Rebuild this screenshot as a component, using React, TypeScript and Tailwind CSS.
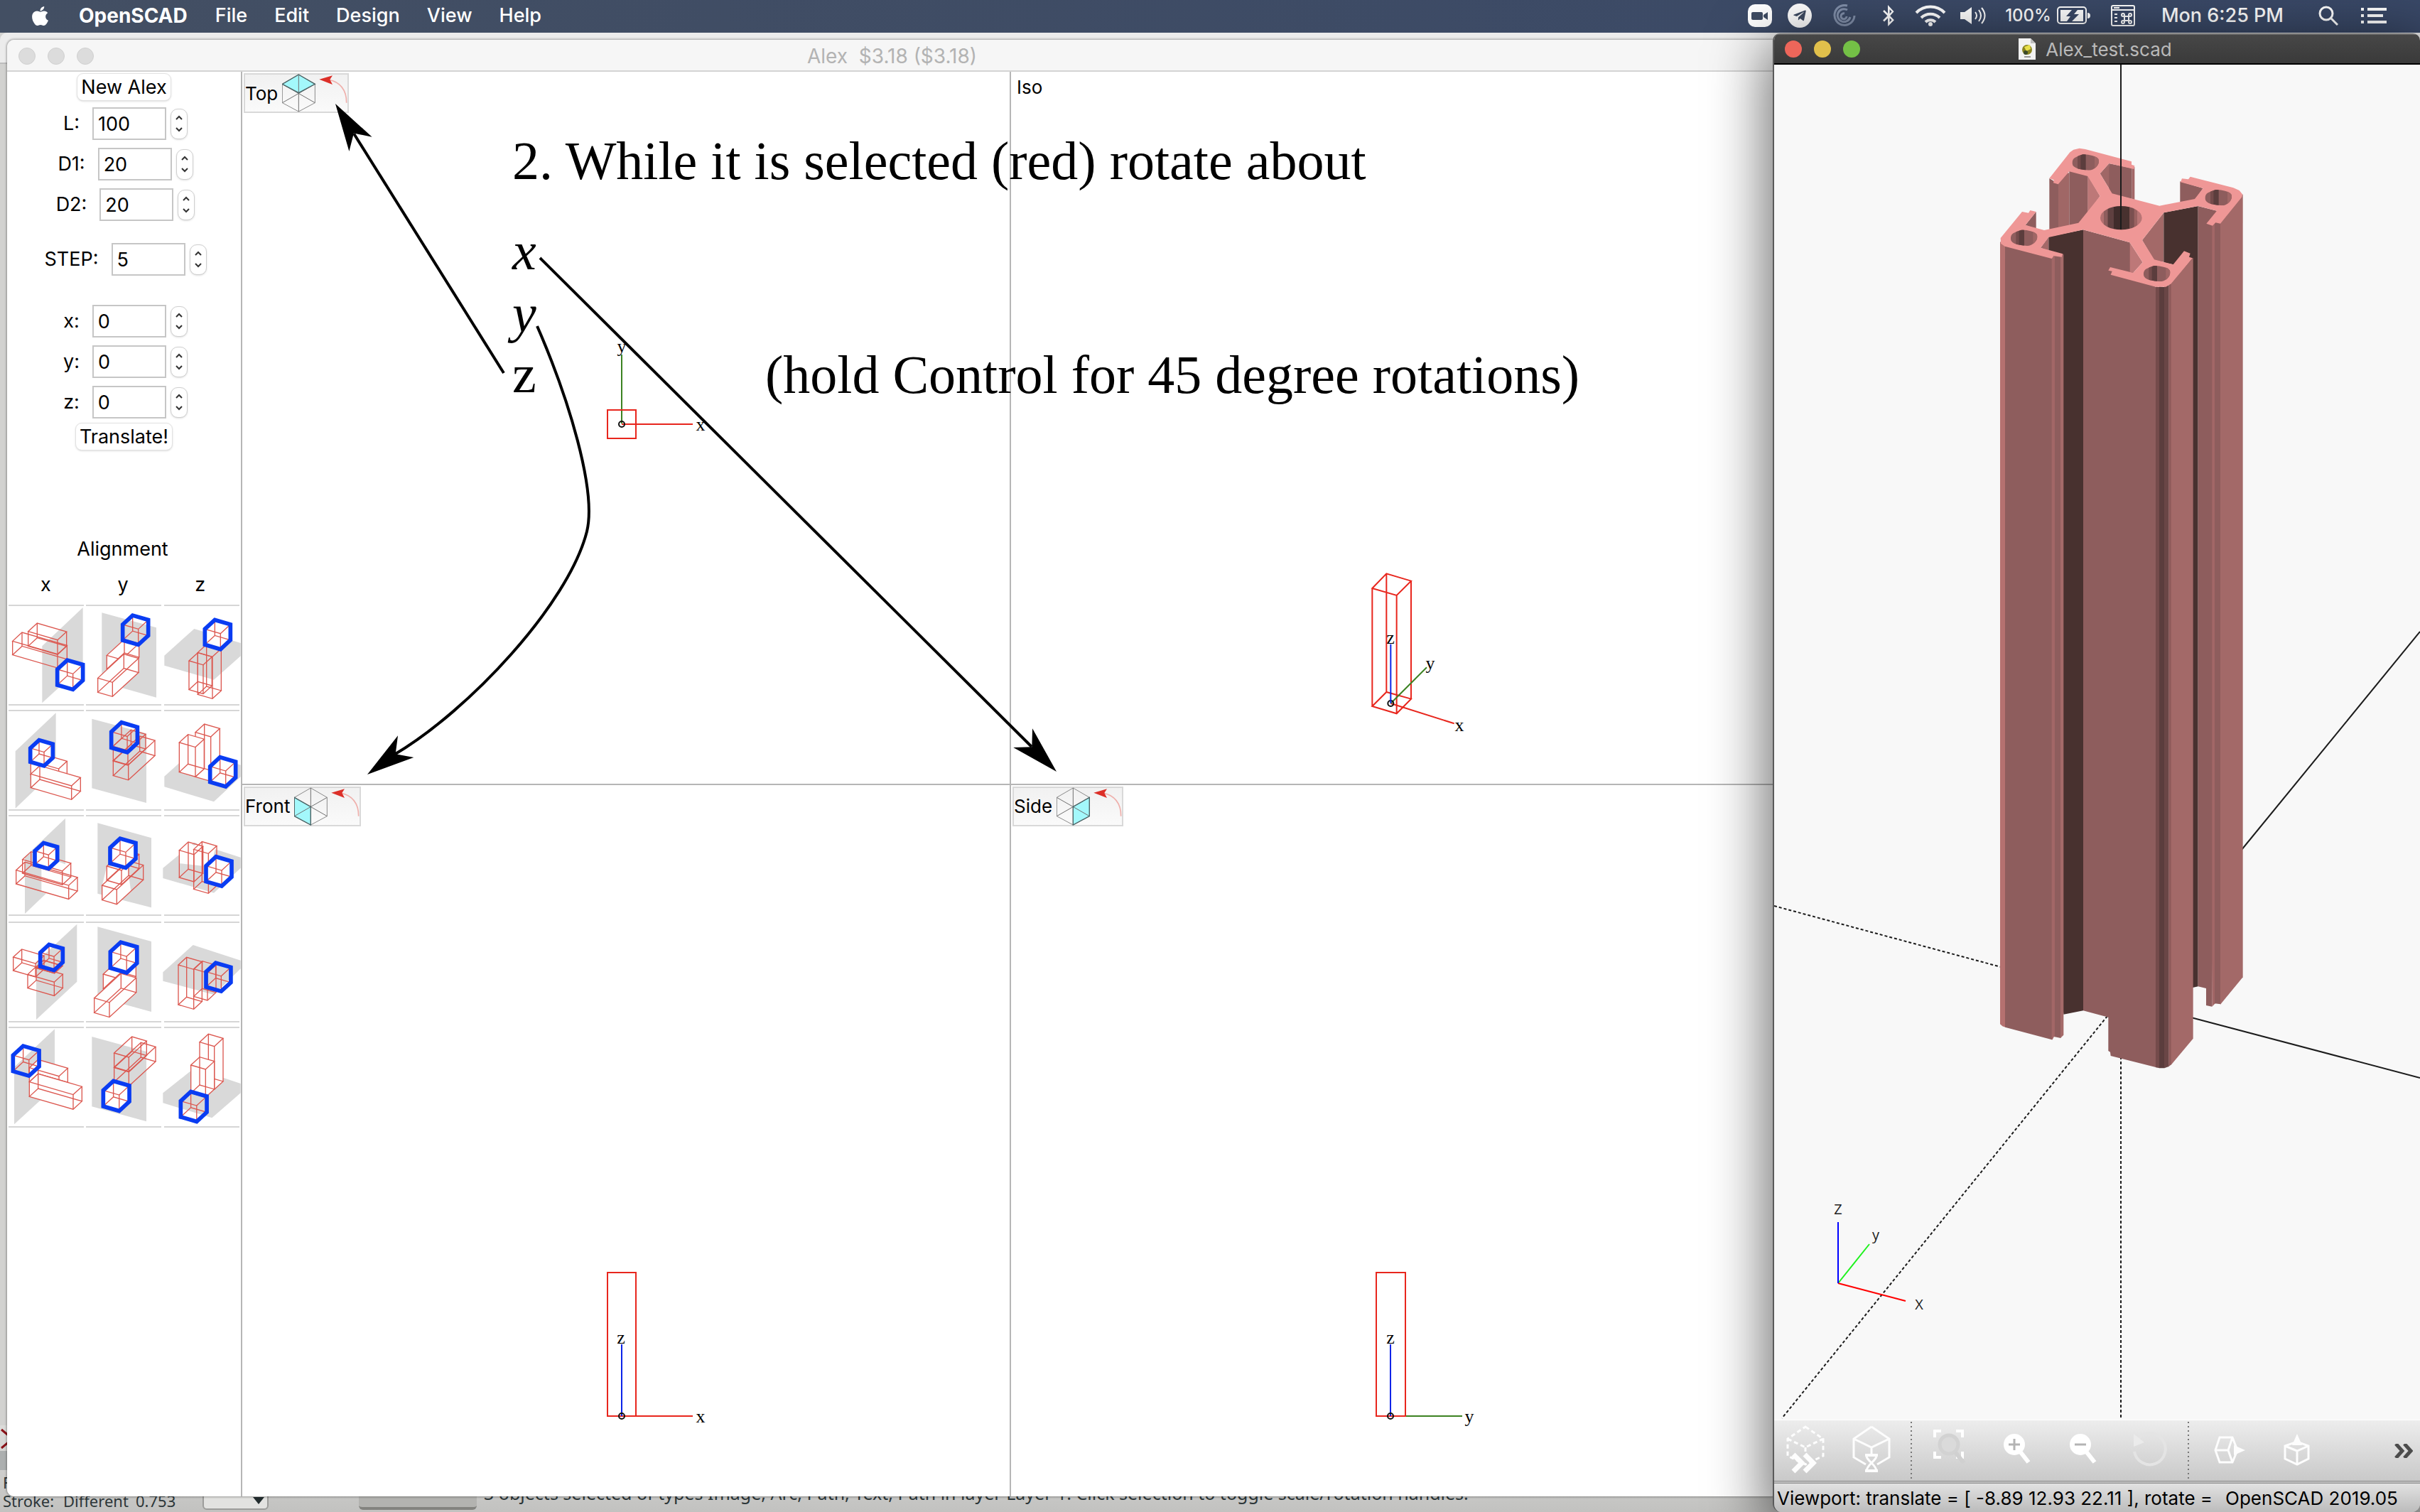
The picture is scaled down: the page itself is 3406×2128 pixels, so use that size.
import React from "react";
import { FaApple, FaTelegramPlane, FaBluetoothB } from "react-icons/fa";

type Pt = [number, number];
const pts = (list: Pt[]) => list.map((p) => p.join(",")).join(" ");

/* ---------- alignment pictograms ---------- */

type BoxDef = [number, number, number, number, number];

function boxPoints([x, y, w, d, h]: BoxDef) {
  const wx = w;
  const wy = w * 0.29;
  const dx = d;
  const dy = -d * 0.92;
  const a: Pt = [x, y];
  const b: Pt = [x + wx, y + wy];
  const c: Pt = [x + wx + dx, y + wy + dy];
  const e: Pt = [x + dx, y + dy];
  const up = (p: Pt): Pt => [p[0], p[1] - h];
  return { a, b, c, e, A: up(a), B: up(b), C: up(c), E: up(e) };
}

function WireBox({ def, solid }: { def: BoxDef; solid?: boolean }) {
  const { a, b, c, e, A, B, C, E } = boxPoints(def);
  return (
    <g stroke="#dc5850" strokeWidth="4" fill="none">
      {solid && <polygon points={pts([a, A, E, C, c, b])} fill="#fefefe" stroke="none" />}
      <polygon points={pts([a, b, c, e])} />
      <polygon points={pts([A, B, C, E])} />
      {[[a, A], [b, B], [c, C], [e, E]].map(([p, q], i) => (
        <line key={i} x1={p[0]} y1={p[1]} x2={q[0]} y2={q[1]} />
      ))}
    </g>
  );
}

function HexCube({ x, y, s, solid }: { x: number; y: number; s: number; solid?: boolean }) {
  const def: BoxDef = [x, y, 66 * s, 42 * s, 66 * s];
  const { a, A, E, C, c, b } = boxPoints(def);
  return (
    <g>
      <WireBox def={def} solid={solid} />
      <polygon points={pts([a, A, E, C, c, b])} fill="none" stroke="#0a3cf2" strokeWidth="17" />
    </g>
  );
}

type Glyph = {
  plane: string;
  mask?: string;
  boxes: BoxDef[];
  solid?: boolean;
  cube: [number, number, number];
  cubeSolid?: boolean;
};

const rowTop = [333, 777, -9, 441, 885];
const colLeft = [36, 365, 693];

const glyphs: Glyph[][] = [
  [
    { plane: "350,345 350,590 178,748 178,508", boxes: [[53, 545, 190, 40, 58], [119, 508, 124, 38, 62]], cube: [242, 672, 1], cubeSolid: true },
    { plane: "432,367 662,430 662,725 432,660", boxes: [[453, 605, 62, 74, 58], [415, 703, 62, 110, 60]], solid: true, cube: [520, 483, 1] },
    { plane: "820,435 1016,495 1016,550 903,650 694,590 694,548", boxes: [[798, 692, 60, 37, 122], [835, 712, 62, 37, 177]], cube: [865, 502, 1], cubeSolid: true },
  ],
  [
    { plane: "236,790 236,1030 65,1193 65,952", boxes: [[130, 1050, 118, 35, 58], [130, 1106, 172, 38, 58]], solid: true, cube: [128, 997, 0.88], cubeSolid: true },
    { plane: "390,815 620,877 620,1170 390,1108", boxes: [[480, 993, 62, 75, 62], [480, 1055, 64, 112, 64]], cube: [472, 937, 1.02] },
    { plane: "820,945 1016,1010 1016,1060 903,1165 694,1102 694,1058", boxes: [[825, 1060, 65, 38, 188], [757, 1040, 68, 37, 125]], solid: true, cube: [887, 1082, 1], cubeSolid: true },
  ],
  [
    { plane: "276,5 276,245 105,408 105,168", mask: "175,190 200,170 297,207 327,265 290,353 175,316", boxes: [[95, 237, 168, 36, 58], [68, 282, 222, 37, 58]], cube: [147, 201, 0.88], cubeSolid: true },
    { plane: "414,25 641,88 641,382 414,323", mask: "433,290 453,208 540,205 555,315 495,367 433,350", boxes: [[453, 267, 62, 74, 60], [433, 350, 62, 112, 62]], cube: [467, 195, 1], cubeSolid: true },
    { plane: "820,107 1016,170 1016,215 903,320 688,258 688,215", mask: "757,138 795,108 820,120 853,98 912,120 890,210 757,195", boxes: [[757, 255, 62, 38, 115], [818, 304, 62, 35, 168]], cube: [870, 272, 1], cubeSolid: true },
  ],
  [
    { plane: "325,452 325,695 153,855 153,612", boxes: [[56, 648, 94, 36, 57], [117, 722, 112, 36, 58], [150, 636, 80, 34, 0]], cube: [170, 630, 0.88] },
    { plane: "414,463 641,525 641,822 414,760", boxes: [[438, 725, 62, 76, 62], [400, 826, 64, 113, 62]], solid: true, cube: [468, 637, 1.04], cubeSolid: true },
    { plane: "815,540 1016,605 1016,640 903,750 688,692 688,655", boxes: [[753, 792, 65, 35, 168], [818, 757, 58, 36, 116]], cube: [870, 717, 0.97] },
  ],
  [
    { plane: "231,895 231,1140 60,1297 60,1055", boxes: [[124, 1118, 125, 37, 60], [124, 1180, 185, 37, 62]], solid: true, cube: [55, 1073, 1.02] },
    { plane: "390,927 620,990 620,1285 390,1222", boxes: [[484, 1058, 62, 75, 62], [484, 1118, 62, 113, 62]], cube: [438, 1221, 1.02], cubeSolid: true },
    { plane: "820,1060 1016,1125 1016,1165 895,1270 688,1207 688,1165", boxes: [[843, 1132, 62, 37, 182], [806, 1165, 62, 37, 118]], solid: true, cube: [763, 1266, 1.02] },
  ],
];

function AlignButton({ row, col }: { row: number; col: number }) {
  const g = glyphs[row][col];
  return (
    <button
      aria-label={`Align ${"xyz"[col]} ${row + 1}`}
      className="flex h-[142px] w-[106px] items-center border-y-2 border-[#d6d6d6] bg-white"
    >
      <svg className="block h-[142px] w-full shrink-0 overflow-visible" viewBox={`${colLeft[col]} ${rowTop[row]} 318 426`}>
        <polygon points={g.plane} fill="#d9d9d9" />
        {g.mask && <polygon points={g.mask} fill="#fefefe" />}
        {g.boxes.map((b, i) => (
          <WireBox key={i} def={b} solid={g.solid} />
        ))}
        <HexCube x={g.cube[0]} y={g.cube[1]} s={g.cube[2]} solid={g.cubeSolid} />
      </svg>
    </button>
  );
}

/* ---------- sidebar ---------- */

function NumberRow({ id, label, value }: { id: string; label: string; value: string }) {
  return (
    <div className="flex h-[46px] items-center justify-center pl-1">
      <label htmlFor={id} className="mr-[18px]">{label}</label>
      <input id={id} defaultValue={value} className="h-[46px] w-[104px] border-2 border-[#c6c6c6] bg-white px-1.5 outline-none" />
      <button aria-label={`Step ${label}`} className="ml-1.5 flex h-[43px] w-6 flex-col items-center justify-center gap-2.5 rounded-[10px] border border-[#cfcfcf] bg-white shadow-sm">
        <svg className="h-[7px] w-3" viewBox="0 0 12 7"><path d="M2 6 6 2 10 6" fill="none" stroke="#333" strokeWidth="2" /></svg>
        <svg className="h-[7px] w-3" viewBox="0 0 12 7"><path d="M2 1 6 5 10 1" fill="none" stroke="#333" strokeWidth="2" /></svg>
      </button>
    </div>
  );
}

function PushButton({ children }: { children: React.ReactNode }) {
  return (
    <button className="h-[39px] self-center rounded-[9px] border border-[#e2e2e2] bg-white px-[5px] leading-[36px] shadow-sm">{children}</button>
  );
}

function Sidebar() {
  return (
    <aside className="flex w-[331px] shrink-0 flex-col border-r-2 border-[#b6b6b6] bg-white pt-0.5 text-[27px]">
      <PushButton>New Alex</PushButton>
      <div className="mt-[9px] flex flex-col gap-[11px]">
        <NumberRow id="len" label="L:" value="100" />
        <NumberRow id="d1" label="D1:" value="20" />
        <NumberRow id="d2" label="D2:" value="20" />
      </div>
      <div className="mt-[31px]">
        <NumberRow id="step" label="STEP:" value="5" />
      </div>
      <div className="mt-[41px] mb-[6px] flex flex-col gap-[11px]">
        <NumberRow id="tx" label="x:" value="0" />
        <NumberRow id="ty" label="y:" value="0" />
        <NumberRow id="tz" label="z:" value="0" />
      </div>
      <PushButton>Translate!</PushButton>
      <h2 className="mt-[119px] pr-1 text-center leading-[40px]">Alignment</h2>
      <div className="mt-[10px] grid grid-cols-3 pr-[3px] text-center leading-[40px]">
        <span>x</span>
        <span>y</span>
        <span>z</span>
      </div>
      <div className="mt-2 grid grid-cols-3 grid-rows-[148px_148px_150px_148px_148px] justify-items-center">
        {[0, 1, 2, 3, 4].map((r) => [0, 1, 2].map((c) => <AlignButton key={`${r}${c}`} row={r} col={c} />))}
      </div>
    </aside>
  );
}

/* ---------- view panes ---------- */

function ViewButton({ name, face }: { name: string; face: string }) {
  return (
    <button className="relative m-0.5 flex h-14 items-center gap-1.5 border-2 border-[#d9d9d9] bg-gradient-to-b from-[#f1f1f1] to-[#fafafa] text-[26px]">
      {name}
      <svg className="h-[54px] w-[92px]" viewBox="257 83 276 162" fill="none">
        <polygon points={face} fill="#a3f8fb" />
        <g stroke="#8a8a8a" strokeWidth="3">
          <path d="M327 86 396 126V205L327 242 258 205V126Z" />
          <path d="M327 86V242M258 126 396 205M396 126 258 205" stroke="#6f6f6f" />
        </g>
        <polygon points={face} stroke="#4d6668" strokeWidth="4" />
        <path d="M455 108C500 116 530 150 529 205" stroke="#efb0ac" strokeWidth="5" />
        <path d="M414 106 470 90 459 107 470 128Z" fill="#dc2f28" />
      </svg>
    </button>
  );
}

const serif = "font-['Liberation_Serif',serif]";

function Pane({ header, dx, dy, children }: { header: React.ReactNode; dx: number; dy: number; children: React.ReactNode }) {
  return (
    <section className="relative min-w-0 overflow-hidden bg-white">
      <svg className={`absolute inset-0 h-full w-full ${serif} text-[26px]`}>
        <g transform={`translate(${-dx} ${-dy})`} fill="none" strokeWidth="2">{children}</g>
      </svg>
      <div className="flex">{header}</div>
    </section>
  );
}

function Tag({ x, y, children }: { x: number; y: number; children: string }) {
  return <text x={x} y={y} fill="#000" textAnchor="middle">{children}</text>;
}

const RED = "#e8261d";
const GREEN = "#3c8222";
const BLUE = "#0b24e8";

function Panes() {
  return (
    <div className="grid min-w-0 flex-1 grid-cols-2 grid-rows-2 gap-0.5 bg-[#b6b6b6]">
      <Pane dx={341} dy={101} header={<ViewButton name="Top" face="327,86 396,126 327,163 258,126" />}>
        <path d="M875 596V499" stroke={GREEN} />
        <path d="M875 597H975" stroke={RED} />
        <rect x="855" y="577" width="40" height="40" stroke={RED} />
        <circle cx="875" cy="597" r="4" stroke="#111" />
        <Tag x={875} y={496}>y</Tag>
        <Tag x={986} y={606}>x</Tag>
      </Pane>
      <Pane dx={1423} dy={101} header={<span className="mt-1 ml-2 text-[26px] leading-[36px]">Iso</span>}>
        <g transform="translate(1900 780) scale(.3333)" strokeWidth="6">
          <path d="M94 642 154 582 258 611 197 673ZM94 144 154 82 258 113 197 174ZM94 144V642M154 82V582M258 113V611M197 174V673" stroke={RED} />
          <path d="M172 630 440 715" stroke={RED} />
          <path d="M172 630 324 478" stroke={GREEN} />
          <circle cx="172" cy="630" r="12" stroke="#111" />
          <path d="M172 630V380" stroke={BLUE} />
        </g>
        <Tag x={1957} y={906}>z</Tag>
        <Tag x={2013} y={942}>y</Tag>
        <Tag x={2054} y={1029}>x</Tag>
      </Pane>
      <Pane dx={341} dy={1105} header={<ViewButton name="Front" face="258,126 327,165 327,242 258,205" />}>
        <rect x="855" y="1791" width="40" height="202" stroke={RED} />
        <path d="M875 1993H975" stroke={RED} />
        <path d="M875 1993V1892" stroke={BLUE} />
        <circle cx="875" cy="1993" r="4" stroke="#111" />
        <Tag x={874} y={1891}>z</Tag>
        <Tag x={986} y={2002}>x</Tag>
      </Pane>
      <Pane dx={1423} dy={1105} header={<ViewButton name="Side" face="327,165 396,126 396,205 327,242" />}>
        <path d="M1957 1993H2058" stroke={GREEN} />
        <rect x="1937" y="1791" width="41" height="202" stroke={RED} />
        <path d="M1957 1993V1892" stroke={BLUE} />
        <circle cx="1957" cy="1993" r="4" stroke="#111" />
        <Tag x={1957} y={1891}>z</Tag>
        <Tag x={2068} y={2002}>y</Tag>
      </Pane>
    </div>
  );
}

/* Notes and arrows drawn over the four panes; coordinates start at the window's corner. */
function Annotations() {
  const head = "M0 0 67-19 49 0 67 19Z";
  return (
    <svg className={`pointer-events-none absolute inset-0 h-full w-full ${serif} text-[76px]`}>
      <g transform="translate(-10 -56)">
        <g fill="none" stroke="#000" strokeWidth="4">
          <path d="M709 525 498 188" />
          <path d="M760 363 1452 1051" />
          <path d="M756 459C800 560 840 690 826 748C800 850 660 1000 555 1062" />
        </g>
        <path d={head} transform="translate(472 146) rotate(58)" />
        <path d={head} transform="translate(1487 1086) rotate(-135)" />
        <path d={head} transform="translate(517 1090) rotate(-36)" />
        <text x="721" y="252">2. While it is selected (red) rotate about</text>
        <text x="721" y="379" fontStyle="italic">x</text>
        <text x="721" y="467" fontStyle="italic">y</text>
        <text x="721" y="552">z</text>
        <text x="1077" y="553">(hold Control for 45 degree rotations)</text>
      </g>
    </svg>
  );
}

function AlexWindow() {
  return (
    <div className="absolute top-[10px] right-[903px] bottom-[22px] left-[10px] flex flex-col overflow-hidden rounded-[10px] bg-white shadow-[0_0_3px_1px_#00000055]">
      <header className="relative flex h-[45px] shrink-0 items-center border-b-2 border-[#d4d4d4] bg-[#f6f6f6] pt-[3px] pl-4">
        <div className="flex gap-[17px]">
          {[0, 1, 2].map((i) => (
            <button key={i} aria-label={["Close", "Minimize", "Zoom"][i]} className="size-6 rounded-full border border-[#d0d0d0] bg-[#dcdcdc]" />
          ))}
        </div>
        <h1 className="flex-1 pr-[124px] text-center text-[28px] leading-[40px] whitespace-pre text-[#b3b3b3]">Alex  $3.18 ($3.18)</h1>
      </header>
      <div className="flex min-h-0 flex-1">
        <Sidebar />
        <Panes />
      </div>
      <Annotations />
    </div>
  );
}

/* ---------- OpenSCAD window ---------- */

const SIDE = "#8e5d5d";
const DARK = "#48312f";
const LIT = "#a36968";

function BoltHole({ cx, cy, id }: { cx: number; cy: number; id: string }) {
  const shape = `M${cx - 56} ${cy + 6}q-2-18 12-26t32-13q20-1 40 5 26 6 28 20 1 16-11 28-14 14-32 14-22-1-42-6-26-7-27-22Z`;
  return (
    <g>
      <clipPath id={id}><path d={shape} /></clipPath>
      <g clipPath={`url(#${id})`}>
        <rect x={cx - 60} y={cy - 40} width="120" height="80" fill={SIDE} />
        <rect x={cx - 34} y={cy - 40} width="14" height="80" fill="#744b4b" />
        <rect x={cx - 21} y={cy - 40} width="22" height="80" fill="#5b3d3d" />
        <rect x={cx + 38} y={cy - 40} width="22" height="80" fill="#a06766" />
      </g>
    </g>
  );
}

function Extrusion() {
  return (
    <g>
      <polygon points="343,213 381,236 381,430 343,440" fill={SIDE} />
      <rect x="381" y="190" width="46" height="240" fill="#a06766" />
      <rect x="427" y="180" width="79" height="240" fill={SIDE} />
      <polygon points="505,200 557,288 505,360" fill="#bd7878" />
      <polygon points="595,150 557,193 610,280" fill="#a06766" />
      <polygon points="595,150 692,170 692,300 600,280 595,270" fill={SIDE} />
      <rect x="692" y="165" width="11" height="138" fill="#a26767" />
      <polygon points="895,226 992,255 957,305 895,318" fill={SIDE} />
      <polygon points="287,354 242,410 287,428" fill={SIDE} />
      <polygon points="306,506 340,460 340,520" fill={LIT} />
      <polygon points="340,460 486,430 486,3727 403,3743 340,3000" fill={DARK} />
      <polygon points="826,358 735,474 786,560 826,566" fill={LIT} />
      <polygon points="826,358 971,330 971,3625 948,3630 866,577 826,568" fill={DARK} />
      <polygon points="971,330 1050,350 1065,404 1030,3710 1005,3705 1005,3633 971,3625" fill={SIDE} />
      <polygon points="1030,410 1043,400 1043,3697 1030,3710" fill="#a26767" />
      <polygon points="1041,400 1066,403 1066,3700 1041,3697" fill={SIDE} />
      <polygon points="1065,400 1160,280 1160,3586 1065,3701" fill={LIT} />
      <polygon points="486,430 683,484 697,612 792,671 792,3966 602,3918 600,3902 592,3897 592,3755 486,3727" fill={SIDE} />
      <polygon points="683,484 737,568 697,612 683,608" fill="#bd7878" />
      <polygon points="792,670 808,672 808,3970 792,3967" fill="#744b4b" />
      <polygon points="807,670 829,672 829,3970 807,3970" fill="#5b3d3d" />
      <polygon points="828,670 848,664 848,3963 828,3970" fill="#6a4646" />
      <polygon points="847,662 858,656 858,3955 847,3963" fill="#8e5a5a" />
      <polygon points="857,655 950,548 950,3845 857,3956" fill={LIT} />
      <polygon points="135,480 157,498 157,3797 145,3793 135,3784" fill="#b57170" />
      <polygon points="156,498 354,550 354,3850 156,3797" fill={SIDE} />
      <polygon points="353,548 367,538 367,3838 362,3838 356,3850 353,3850" fill="#a26767" />
      <polygon points="366,540 391,542 391,3843 366,3838" fill={SIDE} />
      <polygon points="390,545 403,532 403,3830 390,3843" fill="#a56a69" />
      <path
        fill="#ef9796"
        d="M343 213 430 103 445 92 470 86 495 90 690 142 690 155 703 160 700 174 595 150 557 193 608 277 808 329 957 300 992 255 897 229 903 214 930 217 938 206 1120 253 1145 264 1158 280 1156 292 1065 404 1045 400 1032 413 1006 404 1050 350 972 330 826 358 735 474 786 556 866 577 912 520 938 530 933 545 948 550 857 658 835 671 792 671 602 620 608 605 592 602 600 588 697 612 737 568 683 484 486 430 340 462 306 506 400 532 395 545 362 541 353 552 155 500 138 488 137 465 228 354 255 359 262 348 287 354 242 410 321 432 466 401 557 288 505 204 427 184 380 238 360 232 362 220Z"
      />
      <clipPath id="bore"><ellipse cx="646" cy="380" rx="88" ry="50" /></clipPath>
      <g clipPath="url(#bore)">
        <rect x="556" y="328" width="18" height="104" fill="#b27070" />
        <rect x="573" y="328" width="17" height="104" fill={SIDE} />
        <rect x="589" y="328" width="27" height="104" fill="#5f4040" />
        <rect x="615" y="328" width="34" height="104" fill="#402c2b" />
        <rect x="648" y="328" width="35" height="104" fill={DARK} />
        <rect x="682" y="328" width="20" height="104" fill="#7a5050" />
        <rect x="701" y="328" width="14" height="104" fill="#9a6261" />
        <rect x="714" y="328" width="22" height="104" fill="#b87575" />
      </g>
      <BoltHole cx={496} cy={145} id="hole-a" />
      <BoltHole cx={1057} cy={294} id="hole-b" />
      <BoltHole cx={236} cy={464} id="hole-c" />
      <BoltHole cx={797} cy={615} id="hole-d" />
    </g>
  );
}

function Viewport() {
  return (
    <svg className="block min-h-0 w-full flex-1 bg-[#f8f8f8] font-['Open_Sans',sans-serif] text-[20px]">
      <g transform="translate(-2497 -91)">
        <g stroke="#1c1c1c" strokeWidth="2" fill="none">
          <path d="M3150 1202 3406 889" />
          <path d="M3080 1431 3406 1517" />
          <g strokeDasharray="4 3">
            <path d="M2497 1275 2820 1362" />
            <path d="M2966 1430 2508 1996" />
            <path d="M2985 1480V1997" />
          </g>
        </g>
        <g transform="translate(2770 180) scale(.33333)"><Extrusion /></g>
        <path d="M2985 91V323" stroke="#1c1c1c" strokeWidth="2" />
        <g strokeWidth="2" fill="none">
          <path d="M2587 1806 2631 1751" stroke="#1df21d" />
          <path d="M2587 1806 2682 1831" stroke="#f00" />
          <path d="M2587 1806V1720" stroke="#00f" />
        </g>
        <g fill="#222" textAnchor="middle">
          <text x="2587" y="1709">Z</text>
          <text x="2640" y="1745">y</text>
          <text x="2701" y="1843">X</text>
        </g>
      </g>
    </svg>
  );
}

function ToolButton({ label, children }: { label: string; children: React.ReactNode }) {
  return (
    <button aria-label={label} className="flex h-full w-[94px] items-center justify-center">
      <svg className="h-[76px] w-[76px]" viewBox="0 3 76 76" fill="none" stroke="#fdfdfd" strokeWidth="3">{children}</svg>
    </button>
  );
}

function ToolSeparator() {
  return <div className="mr-2 ml-1 h-[82px] w-0.5 bg-[repeating-linear-gradient(to_bottom,#777777_0px_2px,transparent_2px_6px)]" />;
}

function Toolbar() {
  return (
    <div className="flex h-[86px] shrink-0 items-center border-t border-white bg-gradient-to-b from-[#ededed] to-[#c9c9c9]">
      <ToolButton label="Preview">
        <path d="M35 7 60 24V48L35 60 10 48V24ZM10 24 35 36 60 24M35 36V44" strokeDasharray="6 4" />
        <path d="M18 46 30 58 18 70M34 46 46 58 34 70" strokeWidth="7" />
      </ToolButton>
      <ToolButton label="Render">
        <path d="M34 7 59 24V50L42 60M26 60 9 50V24L34 7M9 24 34 36 59 24M34 36V46" />
        <path d="M25 47H43M25 69H43" strokeWidth="4" />
        <path d="M27 49C29 56 40 60 41 69M41 49C39 56 28 60 27 69" />
      </ToolButton>
      <ToolSeparator />
      <ToolButton label="View all">
        <path d="M15 22V13H24M45 13H54V22M54 42V50H45M24 50H15V42" strokeWidth="4" stroke="#fff" />
        <circle cx="35" cy="32" r="13" stroke="#d2d2d2" fill="#dadada" strokeWidth="5" />
        <path d="M44 43 56 58" stroke="#d0d0d0" strokeWidth="6" />
      </ToolButton>
      <ToolButton label="Zoom in">
        <circle cx="33" cy="32" r="15" fill="#fff" stroke="none" />
        <path d="M42 43 53 57" stroke="#fff" strokeWidth="6" />
        <path d="M25 32H41M33 24V40" stroke="#b4b4b4" />
      </ToolButton>
      <ToolButton label="Zoom out">
        <circle cx="32" cy="32" r="15" fill="#fff" stroke="none" />
        <path d="M41 43 52 57" stroke="#fff" strokeWidth="6" />
        <path d="M24 32H40" stroke="#b4b4b4" />
      </ToolButton>
      <ToolButton label="Reset view">
        <path d="M19 24A22 22 0 1 1 14 42" stroke="#e4e4e4" strokeWidth="4" />
        <path d="M13 17V35L28 29Z" fill="#ebebeb" stroke="none" />
      </ToolButton>
      <ToolSeparator />
      <ToolButton label="Right view">
        <path d="M26 22H44L51 40 44 57H26L20 40ZM20 40H38M44 22 38 40 44 57" />
        <path d="M46 33 62 40 46 47Z" fill="#fdfdfd" stroke="none" />
      </ToolButton>
      <ToolButton label="Top view">
        <path d="M24 34 41 28 57 34V52L41 60 24 52ZM24 34 41 41 57 34M41 41V60" />
        <path d="M41 17 48 33H34Z" fill="#fdfdfd" stroke="none" />
      </ToolButton>
      <button aria-label="More tools" className="ml-auto pr-2.5">
        <svg className="h-5 w-[26px]" viewBox="0 0 26 20" fill="none" stroke="#4c4c4c" strokeWidth="5"><path d="M2 0 11 10 2 20M14 0 23 10 14 20" /></svg>
      </button>
    </div>
  );
}

function ScadWindow() {
  return (
    <div className="absolute top-[1px] right-0 bottom-0 flex w-[911px] flex-col overflow-hidden rounded-t-[10px] rounded-b-[12px] border-l-2 border-[#5a5a5a] bg-[#d0d0d0] shadow-[0_20px_80px_10px_#00000090]">
      <header className="flex h-11 shrink-0 items-center border-t-2 border-b-2 border-t-[#6e6e6e] border-b-black bg-gradient-to-b from-[#474747] to-[#3a3a3a] pl-[15px]">
        <div className="flex gap-[17px]">
          <button aria-label="Close" className="size-6 rounded-full bg-[#ed665a]" />
          <button aria-label="Minimize" className="size-6 rounded-full bg-[#e1c04b]" />
          <button aria-label="Zoom" className="size-6 rounded-full bg-[#74c046]" />
        </div>
        <div className="flex flex-1 items-center justify-center gap-3.5 pr-[126px] text-[#b9b9b9]">
          <svg className="h-[30px] w-6" viewBox="0 0 24 30">
            <path d="M0 0H17L24 7V30H0Z" fill="#f2f2f2" />
            <path d="M17 0V7H24Z" fill="#bdbdbd" />
            <circle cx="12" cy="16" r="7" fill="#8a8420" />
            <path d="M8 12 16 9 17 15 11 18Z" fill="#e8e04a" />
            <circle cx="10" cy="20" r="3" fill="#3c4a2a" />
            <path d="M8 26H17" stroke="#999" strokeWidth="2" />
          </svg>
          <h1 className="text-[26px]">Alex_test.scad</h1>
        </div>
      </header>
      <Viewport />
      <Toolbar />
      <footer className="flex h-[44px] shrink-0 items-center gap-[18px] overflow-hidden border-t-4 border-double border-[#8f8f8f] bg-gradient-to-b from-[#e2e2e2] to-[#bcbcbc] pl-1 text-[26px] whitespace-nowrap text-black">
        <span>Viewport: translate = [ -8.89 12.93 22.11 ], rotate =</span>
        <span>OpenSCAD 2019.05</span>
      </footer>
    </div>
  );
}

/* ---------- desktop ---------- */

function MenuBar() {
  return (
    <nav className="flex h-[46px] shrink-0 items-center bg-gradient-to-r from-[#434f63] to-[#394867] pr-[47px] pb-0.5 text-[27px] font-medium text-white">
      <button aria-label="Apple menu" className="ml-[41px]"><FaApple className="size-[31px]" /></button>
      <button className="ml-[39px] text-[28px] font-bold">OpenSCAD</button>
      <button className="ml-[39px]">File</button>
      <button className="ml-[38px]">Edit</button>
      <button className="ml-[38px]">Design</button>
      <button className="ml-[38px]">View</button>
      <button className="ml-[38px]">Help</button>
      <div className="ml-auto flex items-center">
        <svg className="h-8 w-[34px]" viewBox="0 0 34 32">
          <rect width="34" height="32" rx="10" fill="#fff" />
          <rect x="5" y="11" width="16" height="11" rx="2" fill="#3f4c63" />
          <path d="M22 15 28 11V22L22 18Z" fill="#3f4c63" />
        </svg>
        <span className="ml-[22px] flex size-[34px] items-center justify-center rounded-full bg-white text-[#3f4c63]"><FaTelegramPlane className="size-5" /></span>
        <svg className="ml-[29px] h-8 w-[34px]" viewBox="0 0 34 32" fill="none" stroke="#8290ab" strokeWidth="3">
          <path d="M21 2A14 14 0 1 0 31 16M21 8A9 9 0 1 0 25 18M17 13A4 4 0 1 0 20 17" />
        </svg>
        <FaBluetoothB className="ml-8 h-[30px] w-[26px]" />
        <svg className="ml-[24px] h-[30px] w-[44px]" viewBox="0 0 44 30" fill="none" stroke="#fff" strokeWidth="4">
          <path d="M2 11A28 28 0 0 1 42 11M9 18A19 19 0 0 1 35 18M15 24A10 10 0 0 1 29 24" />
          <circle cx="22" cy="27" r="3" fill="#fff" stroke="none" />
        </svg>
        <svg className="ml-5 h-[26px] w-[36px]" viewBox="0 0 36 26" fill="none" stroke="#fff" strokeWidth="2">
          <path d="M0 8H6L16 1V25L6 18H0Z" fill="#fff" stroke="none" />
          <path d="M21 8Q25 13 21 18M26 5Q32 13 26 21M30 2Q39 13 30 24" />
        </svg>
        <span className="ml-[27px] text-[24px]">100%</span>
        <svg className="ml-2 h-[26px] w-12" viewBox="0 0 48 26" fill="none" stroke="#fff" strokeWidth="2">
          <rect x="1" y="1" width="40" height="23" rx="4" />
          <path d="M43 9Q47 9 47 13T43 17Z" fill="#fff" stroke="none" />
          <path d="M5 5H21L13 14H19L14 21H5ZM37 5H29L24 11H31L21 21H37Z" fill="#fff" stroke="none" />
        </svg>
        <svg className="ml-[28px] h-[30px] w-[34px]" viewBox="0 0 34 30" fill="none" stroke="#fff" strokeWidth="2">
          <rect x="1" y="1" width="32" height="28" rx="2" />
          <path d="M1 7H33M5 13H9M5 18H9M5 23H9M4 4H12" />
          <path d="M19 16H25V22H19Z" />
          <circle cx="17" cy="14" r="2" />
          <circle cx="27" cy="14" r="2" />
          <circle cx="17" cy="24" r="2" />
          <circle cx="27" cy="24" r="2" />
        </svg>
        <span className="ml-[37px]">Mon 6:25 PM</span>
        <svg className="ml-[49px] h-7 w-7" viewBox="0 0 28 28" fill="none" stroke="#fff" strokeWidth="3">
          <circle cx="11" cy="11" r="9" />
          <path d="M18 18 27 27" />
        </svg>
        <svg className="ml-8 h-[22px] w-9" viewBox="0 0 36 22" stroke="#fff" strokeWidth="4">
          <path d="M0 2H4M9 2H36M0 11H4M9 11H31M0 20H4M9 20H36" />
        </svg>
      </div>
    </nav>
  );
}

function BackWindow() {
  return (
    <div className="absolute inset-0 flex flex-col justify-between overflow-hidden bg-[#d2d2d0] font-['Noto_Sans',sans-serif] text-[22px] leading-[26px] text-[#2c3638]">
      <div className="h-11 rounded-tl-[10px] border-b-2 border-[#bdbdbd] bg-[#ececec]" />
      <div className="flex h-[122px] flex-col justify-end bg-gradient-to-b from-[#dcdcda] to-[#c2c2c0] pb-[3px]">
        <svg className="h-8 w-4" viewBox="0 0 16 32"><path d="M2 2 14 12M2 28 14 18" stroke="#8c1218" strokeWidth="3" /></svg>
        <div className="h-[27px] w-4 bg-[#acafaf]" />
        <div className="mt-1 pl-1">Fill:</div>
        <div className="flex h-[26px] items-center pl-1 whitespace-nowrap">
          <span className="w-[85px]">Stroke:</span>
          <span className="w-[102px]">Different</span>
          <span className="w-[94px]">0.753</span>
          <span className="flex h-[26px] w-[93px] items-center justify-end rounded-[6px] border-2 border-[#9c9c9a] bg-[#e2e2e0] pr-1">
            <svg className="h-2.5 w-4" viewBox="0 0 16 10"><path d="M0 0H16L8 10Z" fill="#222c2e" /></svg>
          </span>
          <span className="ml-[127px] h-[26px] w-[166px] rounded-[6px] border-b-4 border-[#83837f] bg-[#b3b3b0]" />
          <span className="ml-2.5 self-start text-[25px] leading-[4px]">3 objects selected of types Image, Arc, Path, Text, Path in layer Layer 1. Click selection to toggle scale/rotation handles.</span>
        </div>
      </div>
    </div>
  );
}

export default function App() {
  return (
    <div className="flex h-screen flex-col overflow-hidden bg-[#8ea0c0] font-['Inter','Liberation_Sans',sans-serif] text-black">
      <MenuBar />
      <main className="relative min-h-0 flex-1">
        <BackWindow />
        <AlexWindow />
        <ScadWindow />
      </main>
    </div>
  );
}
